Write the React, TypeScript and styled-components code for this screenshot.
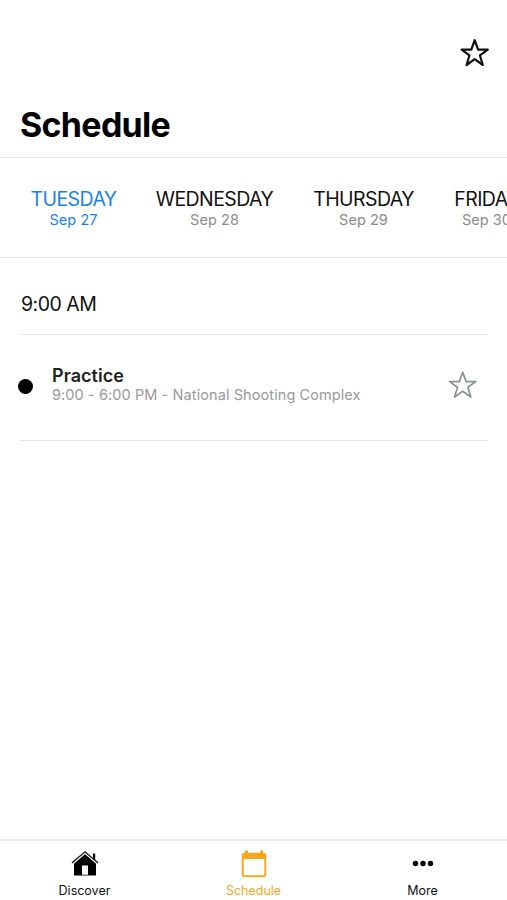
import React from "react";
import styled, { createGlobalStyle } from "styled-components";

const GlobalStyle = createGlobalStyle`
  * { box-sizing: border-box; }
  body { margin: 0; background: #fff; overflow: hidden; }
`;

const Screen = styled.div`
  width: 507px;
  height: 900px;
  display: flex;
  flex-direction: column;
  overflow: hidden;
  background: #fff;
  color: #111;
  font-family: Inter, "Liberation Sans", sans-serif;
`;

const Header = styled.header`
  height: 158px;
  flex: none;
  display: flex;
  flex-direction: column;
  justify-content: space-between;
  padding: 38px 17px 11px 20px;
  border-bottom: 1px solid #e6e6e6;
`;

const Title = styled.h1`
  margin: 0;
  font-size: 34px;
  line-height: 42px;
  font-weight: 700;
  letter-spacing: -0.7px;
  color: #000;
`;

const StarButton = styled.button<{ $tone: string }>`
  display: flex;
  align-self: flex-end;
  padding: 0;
  border: 0;
  background: none;
  color: ${(p) => p.$tone};
`;

const DayTabs = styled.nav`
  height: 100px;
  flex: none;
  display: flex;
  gap: 40px;
  padding: 29px 0 0 31px;
  border-bottom: 1px solid #e6e6e6;
`;

const DayTab = styled.div<{ $active?: boolean; $width: number }>`
  flex: none;
  width: ${(p) => p.$width}px;
  display: flex;
  flex-direction: column;
  align-items: center;
  white-space: nowrap;
  color: ${(p) => (p.$active ? "#1683f2" : "#111")};
`;

const DayName = styled.span`
  font-size: 19.5px;
  line-height: 24px;
  letter-spacing: -0.57px;
`;

const DayDate = styled.span<{ $active?: boolean }>`
  font-size: 14.5px;
  line-height: 17px;
  letter-spacing: 0.05px;
  color: ${(p) => (p.$active ? "#1683f2" : "#8c8c8c")};
`;

const Agenda = styled.main`
  flex: 1;
  padding: 0 19px 0 20px;
`;

const TimeHeading = styled.h2`
  margin: 0;
  height: 77px;
  padding: 34px 0 0 1px;
  border-bottom: 1px solid #e8e8e8;
  font-size: 19.5px;
  line-height: 24px;
  font-weight: 400;
  letter-spacing: -0.5px;
`;

const EventRow = styled.article`
  height: 106px;
  display: flex;
  align-items: flex-start;
  padding-right: 10px;
  border-bottom: 1px solid #e4e4e4;
`;

const Dot = styled.span`
  width: 15px;
  height: 15px;
  margin: 44px 19px 0 -2px;
  border-radius: 50%;
  background: #000;
`;

const EventText = styled.div`
  flex: 1;
  padding-top: 30px;
`;

const EventName = styled.div`
  font-size: 18px;
  line-height: 22px;
  font-weight: 600;
  letter-spacing: 0.05px;
  color: #222;
`;

const EventDetail = styled.div`
  font-size: 14.5px;
  line-height: 16px;
  letter-spacing: 0.09px;
  color: #999;
`;

const RowAction = styled.div`
  padding-top: 35px;
`;

const TabBar = styled.footer`
  height: 61px;
  flex: none;
  display: grid;
  grid-template-columns: repeat(3, 1fr);
  border-top: 2px solid #ececec;
`;

const Tab = styled.div<{ $active?: boolean }>`
  display: flex;
  flex-direction: column;
  align-items: center;
  padding-top: 9px;
  font-size: 12.5px;
  line-height: 16px;
  color: ${(p) => (p.$active ? "#f5a81c" : "#111")};
`;

const TabIcon = styled.span`
  height: 33px;
`;

function Star({ weight }: { weight: number }) {
  return (
    <svg width="30" height="30" viewBox="0 0 30 30" fill="none" stroke="currentColor" strokeWidth={weight} strokeLinejoin="round">
      <path d="M14.7 2.2 18.1 11.6H27.8L19.9 17.3 22.8 27 14.7 21.2 6.6 27 9.5 17.3 1.6 11.6H11.3Z" />
    </svg>
  );
}

function HouseIcon() {
  return (
    <svg width="28" height="28" viewBox="0 0 28 28">
      <path fill="#000" fillRule="evenodd" d="M14 4 25 13.5V25.5H3V13.5ZM11 15.5V24.7H17V15.5Z" />
      <path fill="#000" d="M22 3.5H24.2V10.5L22 8.5Z" />
      <path fill="none" stroke="#fff" strokeWidth=".8" d="M2 14 14 3.5 26 14" />
      <path fill="none" stroke="#222" strokeWidth="1.4" d="M1 12.9 14 1.8 27 12.9" />
    </svg>
  );
}

function CalendarIcon() {
  return (
    <svg width="26" height="28" viewBox="0 0 26 28">
      <rect x="1.7" y="3.7" width="22.6" height="22.6" rx="1.8" fill="none" stroke="currentColor" strokeWidth="2" />
      <path fill="currentColor" d="M1 9V5Q1 3 3 3H4V.5H7V3H19V.5H22V3H23Q25 3 25 5V9Z" />
    </svg>
  );
}

function MoreIcon() {
  return (
    <svg width="22" height="28" viewBox="0 0 22 28" fill="#000">
      <circle cx="3.5" cy="13.5" r="2.7" />
      <circle cx="11" cy="13.5" r="2.7" />
      <circle cx="18.5" cy="13.5" r="2.7" />
    </svg>
  );
}

const days = [
  { name: "TUESDAY", date: "Sep 27", width: 85, active: true },
  { name: "WEDNESDAY", date: "Sep 28", width: 117 },
  { name: "THURSDAY", date: "Sep 29", width: 101 },
  { name: "FRIDAY", date: "Sep 30", width: 65 },
];

export default function App() {
  return (
    <Screen>
      <GlobalStyle />
      <Header>
        <StarButton $tone="#111" aria-label="Favorites"><Star weight={2.2} /></StarButton>
        <Title>Schedule</Title>
      </Header>
      <DayTabs>
        {days.map((d) => (
          <DayTab key={d.name} $active={d.active} $width={d.width}>
            <DayName>{d.name}</DayName>
            <DayDate $active={d.active}>{d.date}</DayDate>
          </DayTab>
        ))}
      </DayTabs>
      <Agenda>
        <TimeHeading>9:00 AM</TimeHeading>
        <EventRow>
          <Dot />
          <EventText>
            <EventName>Practice</EventName>
            <EventDetail>9:00 - 6:00 PM - National Shooting Complex</EventDetail>
          </EventText>
          <RowAction>
            <StarButton $tone="#8b9097" aria-label="Add to favorites"><Star weight={1.7} /></StarButton>
          </RowAction>
        </EventRow>
      </Agenda>
      <TabBar>
        <Tab><TabIcon><HouseIcon /></TabIcon>Discover</Tab>
        <Tab $active><TabIcon><CalendarIcon /></TabIcon>Schedule</Tab>
        <Tab><TabIcon><MoreIcon /></TabIcon>More</Tab>
      </TabBar>
    </Screen>
  );
}
